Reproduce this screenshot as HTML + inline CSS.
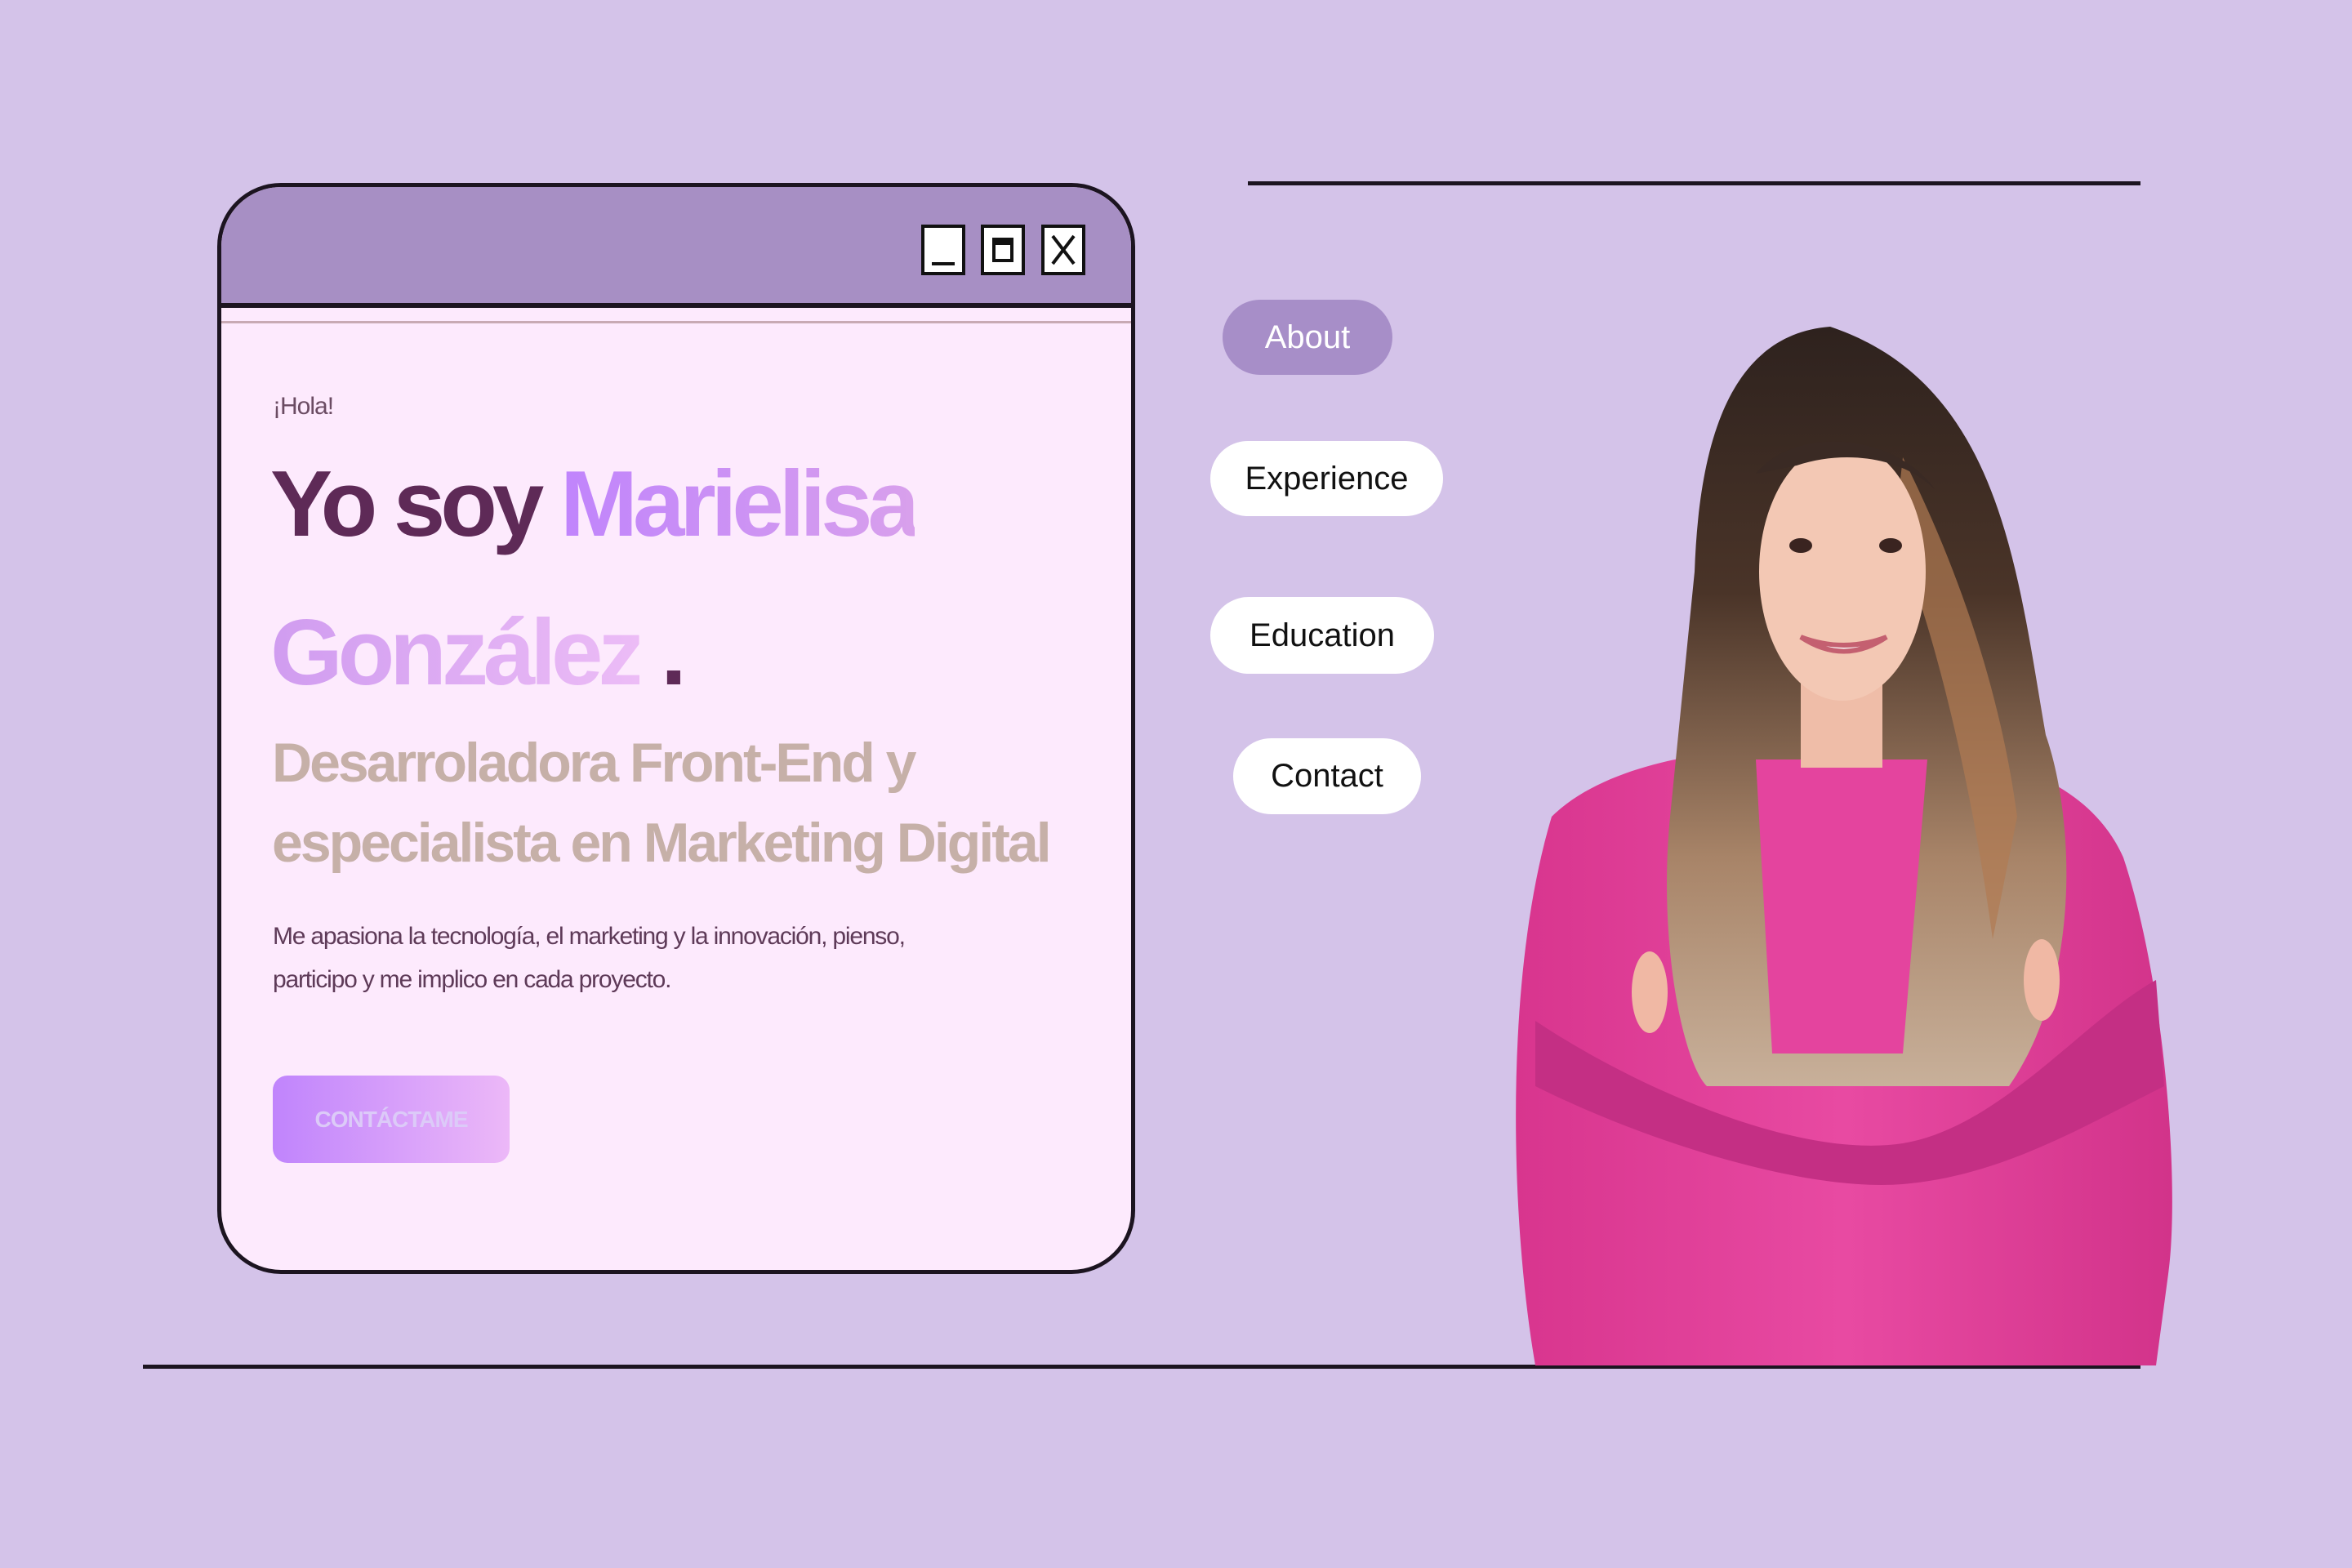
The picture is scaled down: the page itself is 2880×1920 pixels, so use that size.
<!DOCTYPE html>
<html><head><meta charset="utf-8"><style>
*{margin:0;padding:0;box-sizing:border-box}
body{width:2880px;height:1920px;background:#d4c3e9;position:relative;overflow:hidden;font-family:"Liberation Sans",sans-serif}
.line{position:absolute;height:5px;background:#1c1420}
.win{position:absolute;left:266px;top:224px;width:1124px;height:1336px;border:5px solid #1c1420;border-radius:78px;overflow:hidden;background:#fdeafd}
.bar{position:absolute;left:0;top:0;right:0;height:148px;background:#a78fc4;border-bottom:6px solid #1c1420}
.pl{position:absolute;left:0;right:0;top:164px;height:3px;background:#c8aab4}
.btn{position:absolute;top:46px;width:54px;height:62px;border:4px solid #111;background:#fff}
.abs{position:absolute;white-space:nowrap}
.nav{position:absolute;border-radius:50px;font-size:40px;display:flex;align-items:center;justify-content:center;color:#111;background:#fff}
</style></head><body>
<div class="line" style="left:1528px;top:222px;width:1093px"></div>
<div class="line" style="left:175px;top:1671px;width:2446px"></div>

<div class="win">
 <div class="bar">
  <div class="btn" style="left:857px"><div style="position:absolute;left:9px;right:9px;bottom:8px;height:4px;background:#111"></div></div>
  <div class="btn" style="left:930px"><div style="position:absolute;left:10px;right:10px;top:12px;bottom:12px;border:4px solid #111;border-top-width:9px"></div></div>
  <div class="btn" style="left:1004px"><svg width="46" height="54" style="position:absolute;left:0;top:0"><path d="M10 10 L36 44 M36 10 L10 44" stroke="#111" stroke-width="4"/></svg></div>
 </div>
 <div class="pl"></div>
 <div class="abs" style="left:63px;top:252px;font-size:30px;color:#6b4c63;letter-spacing:-1px">¡Hola!</div>
 <div class="abs" style="left:60px;top:314px;font-size:114px;font-weight:bold;letter-spacing:-6px;line-height:150px"><span style="color:#5e2a57">Yo soy </span><span style="background:linear-gradient(90deg,#c084fc,#d8a0ec);-webkit-background-clip:text;color:transparent">Marielisa</span></div>
 <div class="abs" style="left:60px;top:496px;font-size:114px;font-weight:bold;letter-spacing:-6px;line-height:150px"><span style="background:linear-gradient(90deg,#d09cf0,#ecbcf6);-webkit-background-clip:text;color:transparent">González</span><span style="color:#5e2a57"> .</span></div>
 <div class="abs" style="left:62px;top:656px;font-size:68px;font-weight:bold;letter-spacing:-3px;line-height:98px;color:#c6b0a8">Desarroladora Front-End y<br>especialista en Marketing Digital</div>
 <div class="abs" style="left:63px;top:891px;font-size:30px;letter-spacing:-1.2px;line-height:53px;color:#5e3a58">Me apasiona la tecnología, el marketing y la innovación, pienso,<br>participo y me implico en cada proyecto.</div>
 <div class="abs" style="left:63px;top:1088px;width:290px;height:107px;border-radius:18px;background:linear-gradient(90deg,#c084fc,#ecb8f8);color:#dccaf8;font-weight:bold;font-size:28px;letter-spacing:-1px;display:flex;align-items:center;justify-content:center">CONTÁCTAME</div>
</div>

<div class="nav" style="left:1497px;top:367px;width:208px;height:92px;background:#a78ec8;color:#fff">About</div>
<div class="nav" style="left:1482px;top:540px;width:285px;height:92px">Experience</div>
<div class="nav" style="left:1482px;top:731px;width:274px;height:94px">Education</div>
<div class="nav" style="left:1510px;top:904px;width:230px;height:93px">Contact</div>

<svg width="2880" height="1920" style="position:absolute;left:0;top:0">
<defs>
<linearGradient id="hair" x1="0" y1="0" x2="0" y2="1"><stop offset="0" stop-color="#2e221e"/><stop offset="0.35" stop-color="#4a3428"/><stop offset="0.7" stop-color="#a88468"/><stop offset="1" stop-color="#c8b09a"/></linearGradient>
<linearGradient id="sw" x1="0" y1="0" x2="1" y2="0"><stop offset="0" stop-color="#d8358e"/><stop offset="0.5" stop-color="#e84aa2"/><stop offset="1" stop-color="#d2338a"/></linearGradient>
</defs>
<path d="M1900 1000 C1960 940 2080 920 2140 920 L2380 920 C2460 930 2560 960 2600 1050 C2650 1200 2670 1450 2655 1560 L2640 1672 L1880 1672 C1850 1500 1840 1200 1900 1000 Z" fill="url(#sw)"/>
<path d="M2241 400 C2110 410 2080 560 2075 700 L2045 1000 C2030 1150 2060 1300 2090 1330 L2460 1330 C2550 1200 2540 1000 2505 900 C2470 700 2450 470 2241 400 Z" fill="url(#hair)"/>
<path d="M2330 560 C2400 700 2450 850 2470 1000 L2440 1150 C2420 1000 2380 800 2320 650 Z" fill="#b07a52" opacity="0.7"/>
<path d="M2150 930 L2360 930 L2330 1290 L2170 1290 Z" fill="#e4449e"/>
<rect x="2205" y="820" width="100" height="120" fill="#efbda8"/>
<ellipse cx="2256" cy="700" rx="102" ry="158" fill="#f3c8b4"/>
<path d="M2150 580 C2200 520 2320 530 2370 600 C2330 560 2260 550 2200 570 Z" fill="#3a2a24"/>
<ellipse cx="2205" cy="668" rx="14" ry="9" fill="#3a2420"/>
<ellipse cx="2315" cy="668" rx="14" ry="9" fill="#3a2420"/>
<path d="M2205 780 Q2258 815 2310 780 Q2258 800 2205 780 Z" fill="#fff" stroke="#c46070" stroke-width="6"/>
<path d="M1880 1250 C2000 1330 2200 1420 2330 1400 C2450 1380 2550 1250 2640 1200 L2650 1330 C2550 1380 2450 1440 2330 1450 C2200 1460 2000 1390 1880 1330 Z" fill="#c42f84"/>
<ellipse cx="2020" cy="1215" rx="22" ry="50" fill="#f0b8a4"/>
<ellipse cx="2500" cy="1200" rx="22" ry="50" fill="#f0b8a4"/>
</svg>
</body></html>
